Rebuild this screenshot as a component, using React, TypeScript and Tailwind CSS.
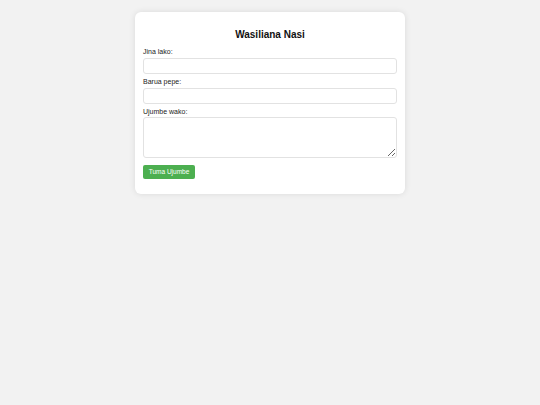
import React from 'react';

export default function App() {
  return (
    <div className="min-h-screen bg-[#f2f2f2] pt-[12px] font-['Liberation_Sans',Arial,sans-serif] text-[#333]">
      <div className="mx-auto w-[270px] rounded-[6px] bg-white px-[8px] pt-[16px] pb-[15px] shadow-[0_0_6px_rgba(0,0,0,0.1)]">
        <h2 className="text-center text-[10px] leading-[13px] font-bold text-[#111]">Wasiliana Nasi</h2>
        <form className="mt-[7px]" onSubmit={(e) => e.preventDefault()}>
          <label className="mb-[2px] block text-[7px] leading-[8px] text-[#222]">Jina lako:</label>
          <input
            type="text"
            className="mb-[4px] block h-[16px] w-full rounded-[3px] border border-[#e2e2e2] bg-white"
          />
          <label className="mb-[2px] block text-[7px] leading-[8px] text-[#222]">Barua pepe:</label>
          <input
            type="email"
            className="mb-[4px] block h-[16px] w-full rounded-[3px] border border-[#e2e2e2] bg-white"
          />
          <label className="mb-[1px] block text-[7px] leading-[8px] text-[#222]">Ujumbe wako:</label>
          <textarea className="block h-[41px] w-full rounded-[3px] border border-[#e2e2e2] bg-white" />
          <button
            type="submit"
            className="mt-[7px] block h-[14px] w-[52px] rounded-[2px] bg-[#4caf50] text-[6.5px] leading-[14px] font-normal text-white"
          >
            Tuma Ujumbe
          </button>
        </form>
      </div>
    </div>
  );
}
